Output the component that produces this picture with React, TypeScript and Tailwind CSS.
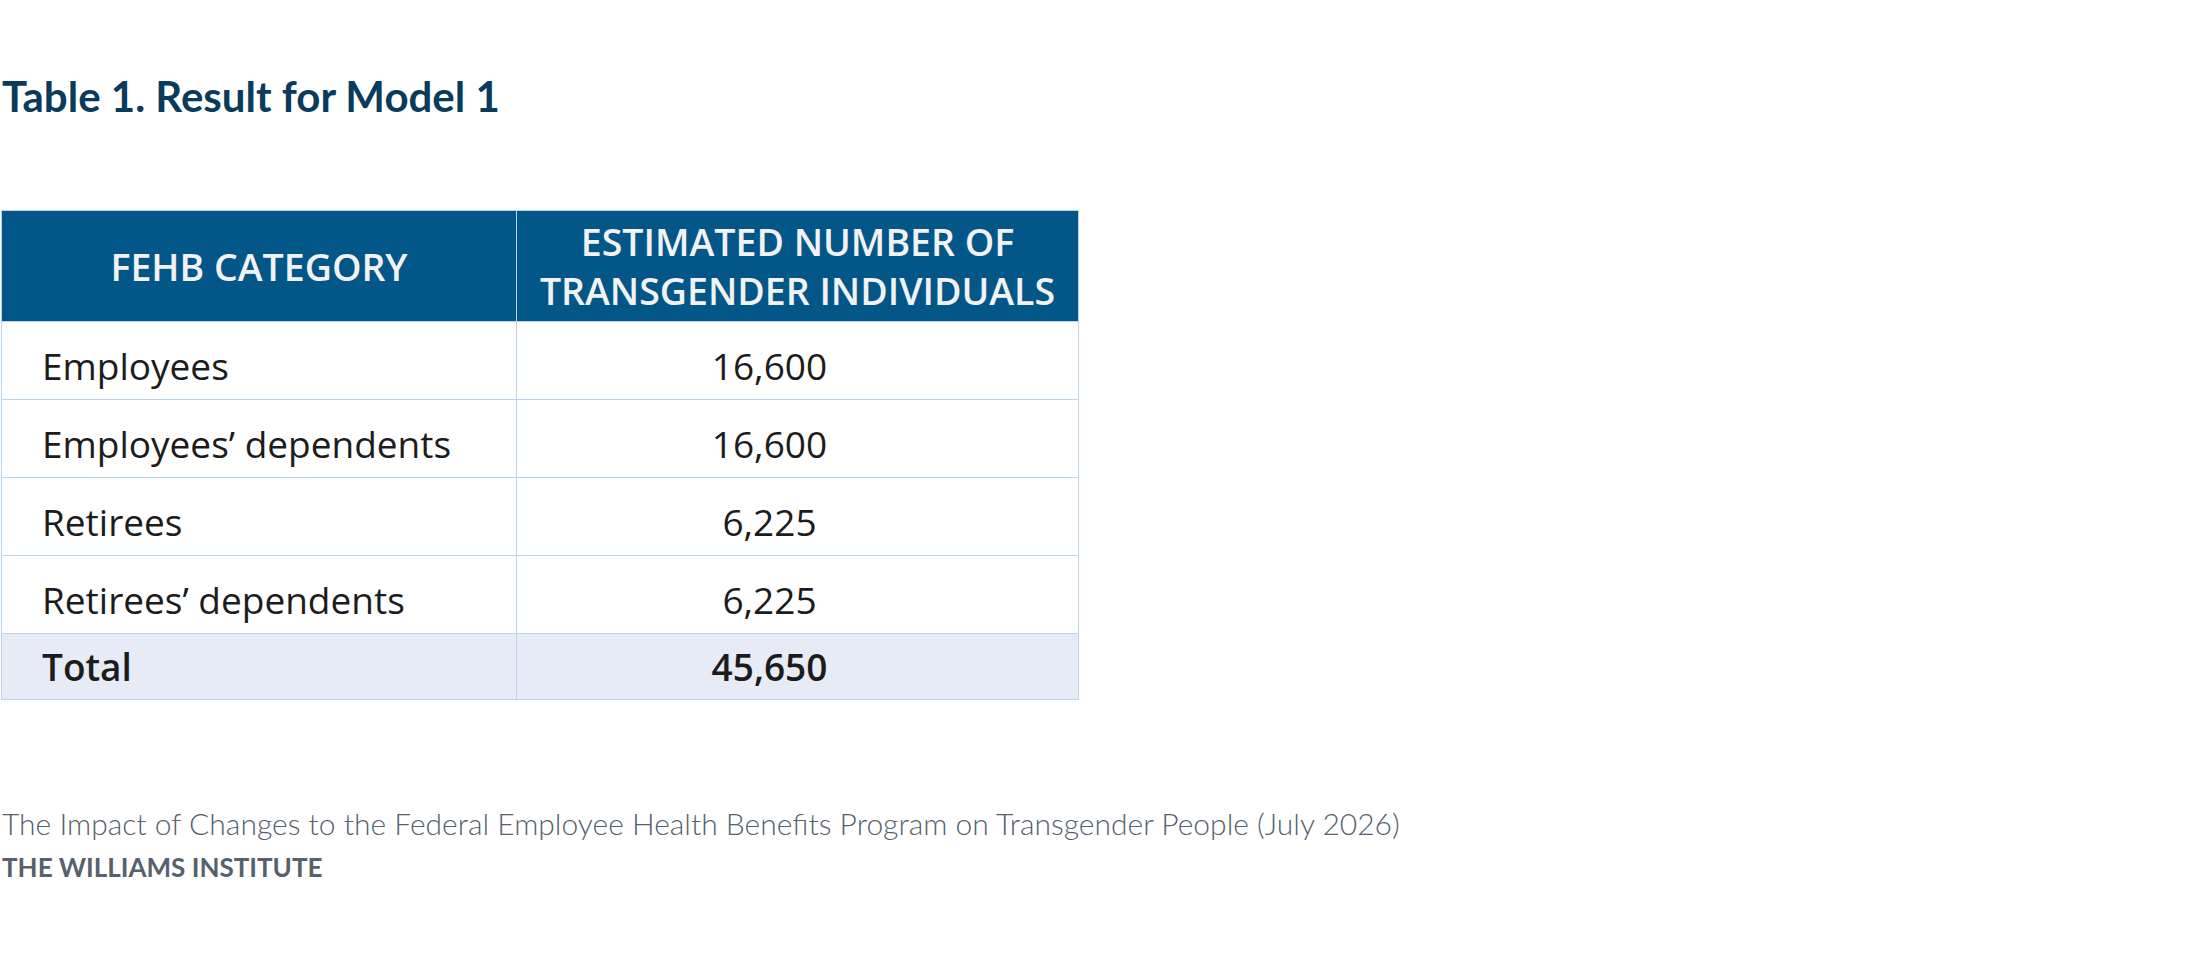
const ROWS = [
  { label: "Employees", value: "16,600" },
  { label: "Employees’ dependents", value: "16,600" },
  { label: "Retirees", value: "6,225" },
  { label: "Retirees’ dependents", value: "6,225" },
];

export default function App() {
  return (
    <div className="w-[2200px] h-[979px] bg-white overflow-hidden">
      <h1 className="pt-[75px] pl-[2px] text-[42px] leading-[42px] font-bold text-[#0a3a5c] font-['Lato',sans-serif]">
        Table 1. Result for Model 1
      </h1>

      <table className="mt-[93px] ml-[1px] w-[1078px] border-collapse font-['Open_Sans',sans-serif]">
        <thead>
          <tr className="h-[111px] bg-[#035688] text-[#f2f2f2] uppercase text-[37.5px] leading-[49px]">
            <th className="w-[515px] border border-[#b9d3ee] font-semibold">FEHB Category</th>
            <th className="border border-[#b9d3ee] font-semibold">
              Estimated Number of
              <br />
              Transgender Individuals
            </th>
          </tr>
        </thead>
        <tbody className="text-[37px] text-[#1c1c1c]">
          {ROWS.map((r) => (
            <tr key={r.label} className="h-[78px]">
              <td className="border border-[#b9d3ee] pl-[40px] pt-[10px]">{r.label}</td>
              <td className="border border-[#b9d3ee] text-center pr-[56px] pt-[10px]">{r.value}</td>
            </tr>
          ))}
          <tr className="h-[66px] bg-[#e6ebf5] font-semibold">
            <td className="border border-[#b9d3ee] pl-[40px]">Total</td>
            <td className="border border-[#b9d3ee] text-center pr-[56px]">45,650</td>
          </tr>
        </tbody>
      </table>

      <div className="mt-[103px] pl-[2px] text-[#56616d] font-['Lato',sans-serif]">
        <p className="text-[30px] leading-[40px] font-light">
          The Impact of Changes to the Federal Employee Health Benefits Program on Transgender People (July 2026)
        </p>
        <p className="mt-[8px] text-[26px] leading-[32px] font-bold">THE WILLIAMS INSTITUTE</p>
      </div>
    </div>
  );
}
